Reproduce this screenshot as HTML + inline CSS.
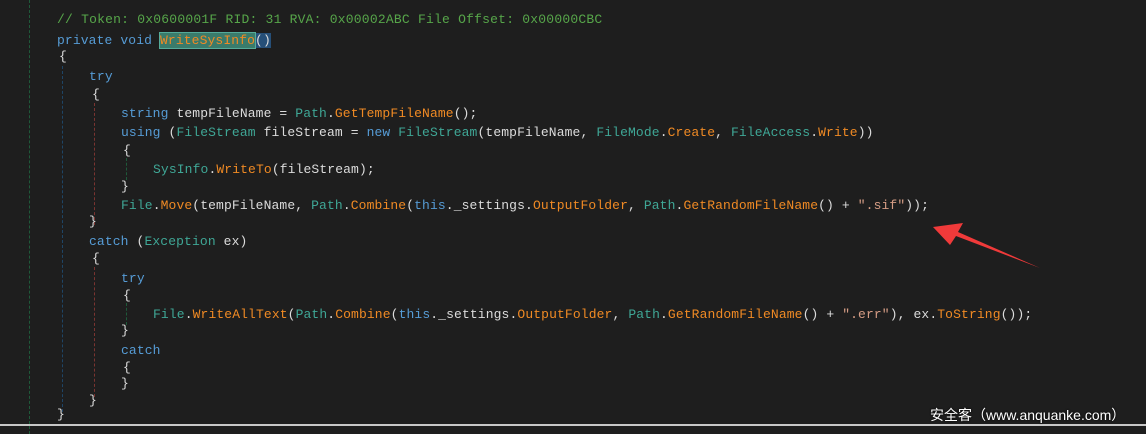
<!DOCTYPE html><html><head><meta charset="utf-8"><style>
body{margin:0;width:1146px;height:434px;background:#1e1e1e;overflow:hidden;position:relative;font-family:"Liberation Mono",monospace;font-size:13px;}
.l{position:absolute;white-space:pre;color:#dcdcdc;letter-spacing:0.12px;line-height:16px}
.c{color:#57a64a;letter-spacing:0.22px}.k{color:#569cd6}.t{color:#3fa796}.m{color:#f08a24}.s{color:#d69d85}
.g{position:absolute;width:0;border-left:1px dashed}
</style></head><body>
<div class="g" style="left:29px;top:0;height:434px;border-color:#1f5a3a"></div>
<div class="g" style="left:62px;top:66px;height:346px;border-color:#1f4566"></div>
<div class="g" style="left:94px;top:103px;height:122px;border-color:#7a3430"></div>
<div class="g" style="left:94px;top:267px;height:130px;border-color:#7a3430"></div>
<div class="g" style="left:126px;top:158px;height:22px;border-color:#1f5a3a"></div>
<div class="g" style="left:126px;top:303px;height:22px;border-color:#1f5a3a"></div>
<div class="l c" style="left:57px;top:12px">// Token: 0x0600001F RID: 31 RVA: 0x00002ABC File Offset: 0x00000CBC</div>
<div class="l" style="left:57px;top:33px"><span class="k">private void </span><span class="m" style="background:#3a7b6b;outline:1px solid #5a9;">WriteSysInfo</span><span style="background:#264f78">()</span></div>
<div class="l" style="left:59px;top:49px">{</div>
<div class="l k" style="left:89px;top:69px">try</div>
<div class="l" style="left:92px;top:87px">{</div>
<div class="l" style="left:121px;top:106px"><span class="k">string</span> tempFileName = <span class="t">Path</span>.<span class="m">GetTempFileName</span>();</div>
<div class="l" style="left:121px;top:125px"><span class="k">using</span> (<span class="t">FileStream</span> fileStream = <span class="k">new</span> <span class="t">FileStream</span>(tempFileName, <span class="t">FileMode</span>.<span class="m">Create</span>, <span class="t">FileAccess</span>.<span class="m">Write</span>))</div>
<div class="l" style="left:123px;top:143px">{</div>
<div class="l" style="left:153px;top:162px"><span class="t">SysInfo</span>.<span class="m">WriteTo</span>(fileStream);</div>
<div class="l" style="left:121px;top:179px">}</div>
<div class="l" style="left:121px;top:198px"><span class="t">File</span>.<span class="m">Move</span>(tempFileName, <span class="t">Path</span>.<span class="m">Combine</span>(<span class="k">this</span>._settings.<span class="m">OutputFolder</span>, <span class="t">Path</span>.<span class="m">GetRandomFileName</span>() + <span class="s">".sif"</span>));</div>
<div class="l" style="left:89px;top:214px">}</div>
<div class="l" style="left:89px;top:234px"><span class="k">catch</span> (<span class="t">Exception</span> ex)</div>
<div class="l" style="left:92px;top:251px">{</div>
<div class="l k" style="left:121px;top:271px">try</div>
<div class="l" style="left:123px;top:288px">{</div>
<div class="l" style="left:153px;top:307px"><span class="t">File</span>.<span class="m">WriteAllText</span>(<span class="t">Path</span>.<span class="m">Combine</span>(<span class="k">this</span>._settings.<span class="m">OutputFolder</span>, <span class="t">Path</span>.<span class="m">GetRandomFileName</span>() + <span class="s">".err"</span>), ex.<span class="m">ToString</span>());</div>
<div class="l" style="left:121px;top:323px">}</div>
<div class="l k" style="left:121px;top:343px">catch</div>
<div class="l" style="left:123px;top:360px">{</div>
<div class="l" style="left:121px;top:376px">}</div>
<div class="l" style="left:89px;top:393px">}</div>
<div class="l" style="left:57px;top:407px">}</div>
<div style="position:absolute;left:0;top:424px;width:1146px;height:2px;background:#c8c8c8"></div>
<svg style="position:absolute;left:0;top:0" width="1146" height="434"><polygon points="933,227 963,223 958,232 1040,268 956,236 950,245" fill="#f03a3a"/></svg>
<div style="position:absolute;left:930px;top:405px;color:#fff;font-family:'Liberation Sans','Noto Sans CJK SC',sans-serif;font-size:14px;text-shadow:0 0 2px #000">安全客（www.anquanke.com）</div>
</body></html>
